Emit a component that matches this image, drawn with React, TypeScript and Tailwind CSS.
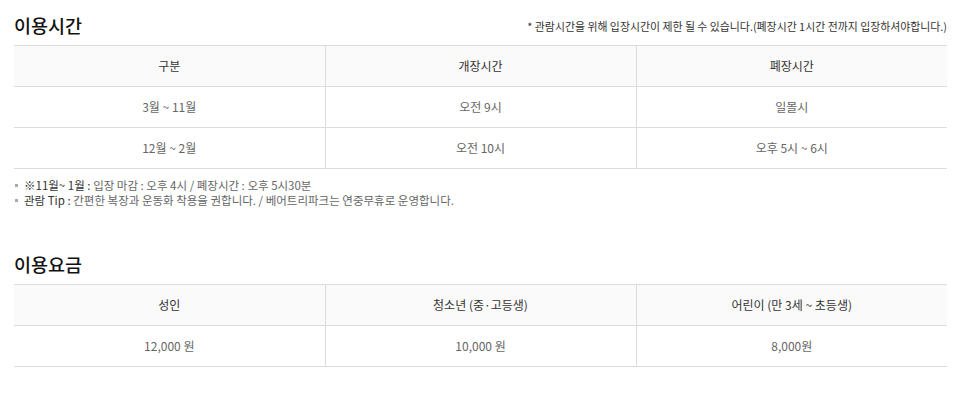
import React from 'react';

const font = { fontFamily: '"Noto Sans CJK KR", "Noto Sans", sans-serif' };

type Row = string[];

function InfoTable({ head, rows }: { head: Row; rows: Row[] }) {
  return (
    <table className="w-full table-fixed border-collapse border-t border-[#dcdcdc] text-[12px]">
      <thead>
        <tr className="bg-[#fafafa]">
          {head.map((h, i) => (
            <th
              key={i}
              className={`h-[41px] border-b border-[#dcdcdc] p-0 text-center font-normal text-[#333] ${i > 0 ? 'border-l' : ''}`}
            >
              {h}
            </th>
          ))}
        </tr>
      </thead>
      <tbody>
        {rows.map((r, ri) => (
          <tr key={ri}>
            {r.map((c, i) => (
              <td
                key={i}
                className={`h-[41px] border-b border-[#dcdcdc] p-0 text-center text-[#666] ${i > 0 ? 'border-l' : ''}`}
              >
                {c}
              </td>
            ))}
          </tr>
        ))}
      </tbody>
    </table>
  );
}

export default function App() {
  return (
    <div className="w-[969px] bg-white pl-[14px] pr-[22px] pt-[13px]" style={font}>
      {/* 이용시간 */}
      <div className="flex items-end justify-between pb-[8px]">
        <h2 className="text-[18.5px] leading-[24px] font-medium text-[#111]">이용시간</h2>
        <p className="pb-[4px] text-[10.9px] leading-[14px] text-[#333]">
          * 관람시간을 위해 입장시간이 제한 될 수 있습니다.(폐장시간 1시간 전까지 입장하셔야합니다.)
        </p>
      </div>
      <InfoTable
        head={['구분', '개장시간', '폐장시간']}
        rows={[
          ['3월 ~ 11월', '오전 9시', '일몰시'],
          ['12월 ~ 2월', '오전 10시', '오후 5시 ~ 6시'],
        ]}
      />
      <ul className="mt-[9px] text-[11.5px] leading-[15px] text-[#666]">
        <li className="flex items-center gap-[6px]">
          <span className="ml-[1px] h-[3px] w-[3px] shrink-0 bg-[#aaa]" />
          <span>
            <span className="text-[#333]">※11월~ 1월 : </span>입장 마감 : 오후 4시 / 폐장시간 : 오후 5시30분
          </span>
        </li>
        <li className="flex items-center gap-[6px]">
          <span className="ml-[1px] h-[3px] w-[3px] shrink-0 bg-[#aaa]" />
          <span>
            <span className="text-[#333]">관람 Tip : </span>간편한 복장과 운동화 착용을 권합니다. / 베어트리파크는 연중무휴로 운영합니다.
          </span>
        </li>
      </ul>

      {/* 이용요금 */}
      <h2 className="mt-[44px] pb-[8px] text-[18.5px] leading-[24px] font-medium text-[#111]">이용요금</h2>
      <InfoTable
        head={['성인', '청소년 (중·고등생)', '어린이 (만 3세 ~ 초등생)']}
        rows={[['12,000 원', '10,000 원', '8,000원']]}
      />
      <div className="h-[36px]" />
    </div>
  );
}
